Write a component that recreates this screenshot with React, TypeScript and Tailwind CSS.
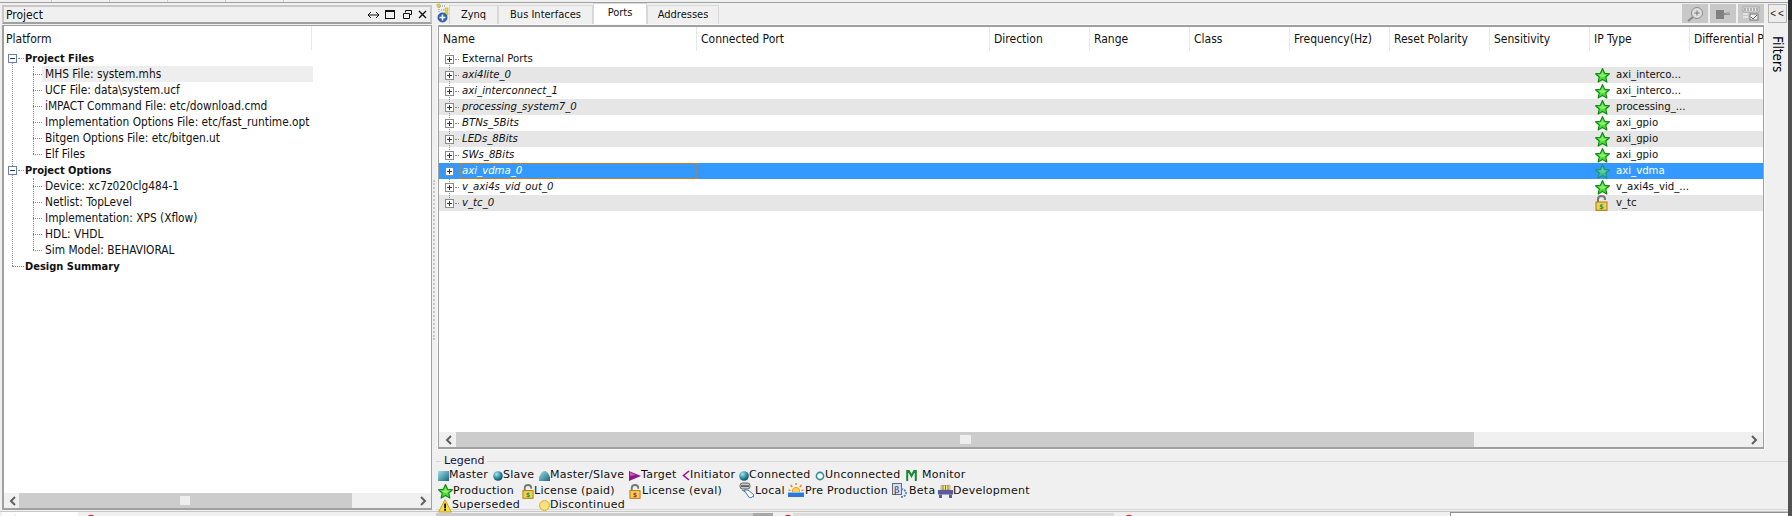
import React from "react";

const Star = ({ size = 14, dim = false }: { size?: number; dim?: boolean }) => (
  <svg width={size} height={size} viewBox="0 0 16 16" className="shrink-0" style={{ opacity: dim ? 0.55 : 1 }}>
    <path d="M8 .6 10.2 5.6 15.5 6.1 11.5 9.6 12.7 15 8 12.2 3.3 15 4.5 9.6.5 6.1 5.8 5.6Z" fill="#4fdc3a" stroke="#0a8a0a" strokeWidth="1.2" strokeLinejoin="round" />
    <path d="M8 4 9.2 7 12 7.4 9.8 9.2 6.2 9.2 4 7.4 6.8 7Z" fill="#8ff07a" />
  </svg>
);

const Lock = ({ color = "#1f9a3a", sign = "$", w = 13, h = 16 }: { color?: string; sign?: string; w?: number; h?: number }) => (
  <svg width={w} height={h} viewBox="0 0 13 16" className="shrink-0">
    <path d="M3 8V4.2C3 2 4.6 1 6.5 1S10 2 10 4.2V5" fill="none" stroke="#777" strokeWidth="2" />
    <rect x="1" y="7" width="11" height="8.4" fill="#f3cf3c" stroke="#b5761a" />
    <rect x="3" y="8.6" width="7" height="5.2" fill="#e8d860" />
    <text x="6.5" y="13.6" textAnchor="middle" fontSize="7" fontWeight="700" fontFamily="DejaVu Sans, sans-serif" fill={color}>{sign}</text>
  </svg>
);

const Ball = ({ hollow = false, size = 10 }: { hollow?: boolean; size?: number }) => (
  <svg width={size} height={size} viewBox="0 0 10 10" className="shrink-0">
    <defs>
      <radialGradient id="ballg" cx="35%" cy="30%" r="80%">
        <stop offset="0" stopColor="#a8e4ec" />
        <stop offset=".55" stopColor="#2a8c9e" />
        <stop offset="1" stopColor="#123c50" />
      </radialGradient>
    </defs>
    {hollow ? <circle cx="5" cy="5" r="3.6" fill="#fff" stroke="#2a8c9e" strokeWidth="1.6" /> : <circle cx="5" cy="5" r="4.8" fill="url(#ballg)" />}
  </svg>
);

const Square = () => (
  <svg width="11" height="10" viewBox="0 0 11 10" className="shrink-0">
    <defs>
      <linearGradient id="sqg" x1="0" y1="0" x2="1" y2="1">
        <stop offset="0" stopColor="#9fdfe8" />
        <stop offset="1" stopColor="#16657c" />
      </linearGradient>
    </defs>
    <rect width="11" height="10" fill="url(#sqg)" />
  </svg>
);

const Dome = () => (
  <svg width="11" height="10" viewBox="0 0 11 10" className="shrink-0">
    <path d="M0 10V6L2.5 1.5 5 0h1.5L9 2l2 4v4Z" fill="url(#sqg)" />
  </svg>
);

const Target = () => (
  <svg width="12" height="10" viewBox="0 0 12 10" className="shrink-0">
    <path d="M0 0 12 5 0 10Z" fill="#8a1a80" />
    <path d="M1 1 7 4 1 5Z" fill="#d050c8" />
  </svg>
);

const Initiator = () => (
  <svg width="8" height="11" viewBox="0 0 8 11" className="shrink-0">
    <path d="M7 1 1.5 5.5 7 10" fill="none" stroke="#a0109a" strokeWidth="1.6" />
  </svg>
);

const Monitor = () => (
  <svg width="11" height="11" viewBox="0 0 11 11" className="shrink-0">
    <path d="M1.2 11V1h1.6L5.5 6 8.2 1h1.6v10" fill="none" stroke="#178a30" strokeWidth="2" />
  </svg>
);

const Warn = () => (
  <svg width="14" height="14" viewBox="0 0 14 14" className="shrink-0">
    <path d="M7 .8 13.4 13H.6Z" fill="#f8e040" stroke="#c9a020" strokeWidth="1" strokeLinejoin="round" />
    <rect x="6.2" y="4.6" width="1.8" height="4.8" fill="#111" />
    <rect x="6.2" y="10" width="1.8" height="1.8" fill="#111" />
  </svg>
);

const Disc = () => (
  <svg width="11" height="11" viewBox="0 0 11 11" className="shrink-0">
    <circle cx="5.5" cy="5.5" r="4.9" fill="#fbe27a" stroke="#d8a828" />
  </svg>
);

const LocalIcon = () => (
  <svg width="16" height="16" viewBox="0 0 16 16" className="shrink-0 -mt-[3px]">
    <rect x="1" y="1" width="10" height="6" rx="2.5" fill="#c8c8c8" stroke="#666" />
    <rect x="2" y="3.4" width="8" height="1.4" fill="#444" />
    <path d="M3 8 15 15" stroke="#666" />
    <path d="M5 8h4l6 5-2 2.4h-3Z" fill="#fff" stroke="#3a78c8" />
  </svg>
);

const SunIcon = () => (
  <svg width="16" height="14" viewBox="0 0 16 14" className="shrink-0 -mt-[3px]">
    <path d="M8 0v2M2.5 2 4.2 4M13.5 2 11.8 4M.5 7l2 .6M15.5 7l-2 .6" stroke="#f08020" strokeWidth="1.4" />
    <circle cx="8" cy="8" r="3.6" fill="#fbd850" stroke="#f09820" />
    <path d="M0 9h16v1H0z" fill="#8ec0f0" />
    <path d="M0 10 16 10 16 14 0 14Z" fill="#2a78d8" />
  </svg>
);

const BetaIcon = () => (
  <svg width="16" height="15" viewBox="0 0 16 15" className="shrink-0 -mt-[3px]">
    <rect x=".5" y=".5" width="9" height="11" fill="#d8dcf0" stroke="#606890" />
    <text x="5" y="9.6" textAnchor="middle" fontSize="9" fontFamily="DejaVu Serif, serif" fill="#333">β</text>
    <path d="M9 6c3 0 5 2 5 4s-2 4-5 4" fill="none" stroke="#4a80d8" strokeWidth="1.8" strokeDasharray="2 1" />
  </svg>
);

const DevIcon = () => (
  <svg width="15" height="13" viewBox="0 0 15 13" className="shrink-0">
    <rect x="3" y="0" width="9" height="5" fill="#f4e48a" stroke="#a89030" strokeWidth=".6" />
    <path d="M5 0v5M7.5 0v5M10 0v5" stroke="#777" />
    <rect x="0" y="5" width="15" height="4.5" fill="#5a5a9c" />
    <rect x="1" y="9.5" width="3" height="3.5" fill="#5a5a9c" />
    <rect x="11" y="9.5" width="3" height="3.5" fill="#5a5a9c" />
  </svg>
);

const Plus = ({ minus = false, dark = false }: { minus?: boolean; dark?: boolean }) => (
  <svg width="9" height="9" viewBox="0 0 9 9" className="shrink-0">
    <rect x=".5" y=".5" width="8" height="8" fill="#fff" stroke={dark ? "#6b7ea8" : "#8a8a8a"} />
    <path d="M2 4.5h5" stroke={dark ? "#20309a" : "#333"} />
    {!minus && <path d="M4.5 2v5" stroke="#333" />}
  </svg>
);

const RedArc = () => (
  <svg width="10" height="5" viewBox="0 0 10 5" className="shrink-0">
    <circle cx="5" cy="6" r="4.5" fill="#fff" stroke="#d83030" strokeWidth="1.4" />
  </svg>
);

const tree: [string, 0 | 1, boolean?][] = [
  ["Project Files", 0],
  ["MHS File: system.mhs", 1, true],
  ["UCF File: data\\system.ucf", 1],
  ["iMPACT Command File: etc/download.cmd", 1],
  ["Implementation Options File: etc/fast_runtime.opt", 1],
  ["Bitgen Options File: etc/bitgen.ut", 1],
  ["Elf Files", 1],
  ["Project Options", 0],
  ["Device: xc7z020clg484-1", 1],
  ["Netlist: TopLevel", 1],
  ["Implementation: XPS (Xflow)", 1],
  ["HDL: VHDL", 1],
  ["Sim Model: BEHAVIORAL", 1],
  ["Design Summary", 0],
];

const cols = [
  ["Name", "w-[258px]"],
  ["Connected Port", "w-[293px]"],
  ["Direction", "w-[100px]"],
  ["Range", "w-[100px]"],
  ["Class", "w-[100px]"],
  ["Frequency(Hz)", "w-[100px]"],
  ["Reset Polarity", "w-[100px]"],
  ["Sensitivity", "w-[100px]"],
  ["IP Type", "w-[100px]"],
  ["Differential Pair", "w-[73px]"],
];

const ports: [string, string, boolean, "star" | "lock" | ""][] = [
  ["External Ports", "", false, ""],
  ["axi4lite_0", "axi_interco...", true, "star"],
  ["axi_interconnect_1", "axi_interco...", true, "star"],
  ["processing_system7_0", "processing_...", true, "star"],
  ["BTNs_5Bits", "axi_gpio", true, "star"],
  ["LEDs_8Bits", "axi_gpio", true, "star"],
  ["SWs_8Bits", "axi_gpio", true, "star"],
  ["axi_vdma_0", "axi_vdma", true, "star"],
  ["v_axi4s_vid_out_0", "v_axi4s_vid_...", true, "star"],
  ["v_tc_0", "v_tc", true, "lock"],
];

const ArrowL = () => (
  <svg width="8" height="10" viewBox="0 0 8 10"><path d="M6 1 2 5l4 4" fill="none" stroke="#606060" strokeWidth="2" /></svg>
);
const ArrowR = () => (
  <svg width="8" height="10" viewBox="0 0 8 10"><path d="M2 1l4 4-4 4" fill="none" stroke="#606060" strokeWidth="2" /></svg>
);

const Item = ({ w, icon, label }: { w: string; icon: React.ReactNode; label: string }) => (
  <div className={`flex items-center ${w} shrink-0`}>
    {icon}
    <span className="whitespace-nowrap">{label}</span>
  </div>
);

export default function App() {
  return (
    <div className="w-[1792px] h-[516px] overflow-hidden bg-[#f0f0f0] text-[#111] flex font-['DejaVu_Sans_Condensed','DejaVu_Sans',sans-serif] text-[11px]">
      <div className="w-[1788px] shrink-0 flex flex-col">
        <div className="h-[3px] shrink-0 border-b border-[#a0a0a0] flex">
          {[52, 58, 58, 58, 58].map((w, i) => (
            <div key={i} style={{ width: w }} className="h-[2px] border-r border-[#c8c8c8]" />
          ))}
        </div>
        <div className="flex flex-1 min-h-0">
          {/* left panel */}
          <div className="w-[432px] shrink-0 pl-[2px] flex flex-col">
            <div className="h-[19px] mt-[2px] shrink-0 border-2 border-[#c8c8c8] border-b-[#a0a0a0] flex items-center pl-[2px] pr-[3px] text-[12px]">
              <span className="flex-1">Project</span>
              <div className="flex items-center gap-[5px]">
                <svg width="11" height="8" viewBox="0 0 11 8"><path d="M0 4h11M3 1 0 4l3 3M8 1l3 3-3 3" fill="none" stroke="#111" /></svg>
                <svg width="10" height="9" viewBox="0 0 10 9" className="ml-[1px]"><rect x=".5" y=".5" width="9" height="8" fill="none" stroke="#111" /><path d="M0 1.5h10" stroke="#111" /></svg>
                <svg width="9" height="9" viewBox="0 0 9 9" className="ml-[3px]"><path d="M2.5 2.5V.5h6v4h-2M.5 3.5h6v5h-6z" fill="none" stroke="#111" /></svg>
                <svg width="9" height="9" viewBox="0 0 9 9" className="ml-[1px]"><path d="M1 1l7 7M8 1 1 8" stroke="#111" strokeWidth="1.4" /></svg>
              </div>
            </div>
            <div className="h-[1px] shrink-0" />
            <div className="flex-1 min-h-0 border-2 border-[#a0a0a0] border-t-[1px] border-r-[1px] bg-white flex flex-col">
              <div className="h-[24px] w-[308px] shrink-0 border-r border-[#e8e8e8] pl-[2px] pt-[2px] flex items-center text-[12px]">Platform</div>
              <div className="relative flex-1 min-h-0">
                <div className="absolute left-[8px] top-[8px] h-[208px] border-l border-dotted border-[#8a8a8a]" />
                <div className="absolute left-[29px] top-[16px] h-[88px] border-l border-dotted border-[#8a8a8a]" />
                <div className="absolute left-[29px] top-[128px] h-[72px] border-l border-dotted border-[#8a8a8a]" />
                {tree.map(([label, level, hi], i) =>
                  level === 0 ? (
                    <div key={i} className="relative h-[16px] flex items-center">
                      {label !== "Design Summary" ? (
                        <>
                          <span className="w-[4px]" />
                          <Plus minus dark />
                          <span className="w-[6px] ml-[1px] border-t border-dotted border-[#8a8a8a]" />
                        </>
                      ) : (
                        <>
                          <span className="w-[8px]" />
                          <span className="w-[12px] border-t border-dotted border-[#8a8a8a]" />
                        </>
                      )}
                      <span className="ml-[1px] pt-[2px] font-bold">{label}</span>
                    </div>
                  ) : (
                    <div key={i} className="relative h-[16px] flex items-center">
                      <span className="ml-[29px] w-[9px] border-t border-dotted border-[#8a8a8a]" />
                      <span className={`h-[16px] w-[271px] pl-[3px] pt-[2px] text-[11.8px] whitespace-nowrap flex items-center ${hi ? "bg-[#eeeeee]" : ""}`}>{label}</span>
                    </div>
                  )
                )}
              </div>
              <div className="h-[15px] shrink-0 bg-[#f0f0f0] flex items-center">
                <span className="w-[15px] flex justify-center pl-[2px]"><ArrowL /></span>
                <div className="w-[333px] h-[15px] bg-[#cccccc] flex items-center">
                  <div className="ml-[161px] w-[10px] h-[9px] bg-[#eeeeee]" />
                </div>
                <span className="ml-auto pr-[4px]"><ArrowR /></span>
              </div>
            </div>
            <div className="h-[1px] shrink-0" />
          </div>

          {/* grip */}
          <div className="w-[4px] shrink-0 relative">
            <div className="absolute left-[1px] top-[177px] h-[160px] border-l-2 border-dotted border-[#c8c8c8]" />
          </div>

          {/* right */}
          <div className="flex-1 min-w-0 flex flex-col">
            <div className="flex h-[22px] shrink-0 items-end">
              <svg width="13" height="20" viewBox="0 0 13 20" className="shrink-0 self-start">
                <rect x="1" y="1" width="3" height="3" fill="#e8e020" stroke="#b0a820" strokeWidth=".5" />
                <rect x="9" y="5" width="3" height="3" fill="#e8e020" stroke="#b0a820" strokeWidth=".5" />
                <rect x="9" y="9" width="3" height="3" fill="#e8e020" stroke="#b0a820" strokeWidth=".5" />
                <path d="M3 4v5M4 3h5M5 7h4" stroke="#888" strokeDasharray="1 1" />
                <circle cx="6.5" cy="14.5" r="5" fill="#3060b0" />
                <path d="M3.5 14.5h6M6.5 11.5v6" stroke="#fff" strokeWidth="1.6" />
              </svg>
              <div className="flex items-end h-[22px]">
                {[
                  ["Zynq", "w-[49px]"],
                  ["Bus Interfaces", "w-[95px]"],
                  ["Ports", "w-[54px]"],
                  ["Addresses", "w-[72px]"],
                ].map(([t, w]) =>
                  t === "Ports" ? (
                    <div key={t} className={`${w} h-[22px] bg-white border border-b-0 border-[#d8d8d8] flex items-center justify-center pb-[2px]`}>{t}</div>
                  ) : (
                    <div key={t} className={`${w} h-[20px] bg-[#f0f0f0] border border-b-0 border-[#d8d8d8] flex items-center justify-center`}>{t}</div>
                  )
                )}
              </div>
              <div className="flex-1 h-[22px] flex items-start justify-end pt-[1px] gap-[2px] pr-[1px]">
                <div className="w-[26px] h-[19px] bg-[#c8c8c8] flex items-center justify-center">
                  <svg width="18" height="16" viewBox="0 0 18 16"><circle cx="11" cy="7" r="5.5" fill="#dedede" stroke="#8a8a8a" /><path d="M11 4.5v5M8.5 7h5" stroke="#777" /><path d="M7 11 2 15" stroke="#8a8a8a" strokeWidth="2" /></svg>
                </div>
                <div className="w-[26px] h-[19px] bg-[#c8c8c8] flex items-center justify-center">
                  <svg width="18" height="12" viewBox="0 0 18 12"><rect x="2" y="2" width="8" height="9" fill="#808080" /><path d="M10 6h6" stroke="#909090" strokeWidth="2" /><circle cx="14" cy="5" r="1.6" fill="#a8a8a8" /></svg>
                </div>
                <div className="w-[26px] h-[19px] bg-[#c8c8c8] flex items-center justify-center">
                  <svg width="18" height="15" viewBox="0 0 18 15"><rect x="1" y="1" width="16" height="5" fill="#e8e8e8" stroke="#888" strokeWidth=".6" /><path d="M3 2v3M6 2v3M9 2v3M12 2v3M15 2v3" stroke="#777" /><path d="M1 8h5M1 11h5" stroke="#fff" /><rect x="8" y="8" width="8" height="6" fill="#eee" stroke="#777" /><path d="M9 11l2 2 4-4" fill="none" stroke="#666" /></svg>
                </div>
                <div className="ml-[2px] w-[19px] h-[19px] bg-[#ececec] border border-[#b4b4b4] flex items-center justify-center font-['Liberation_Sans',sans-serif] text-[10px] tracking-[2px] pl-[1px] text-[#222]">&lt;&lt;</div>
              </div>
            </div>

            <div className="flex h-[424px] shrink-0">
              {/* table */}
              <div className="ml-[2px] w-[1326px] h-[424px] shrink-0 border-2 border-[#a0a0a0] border-l-[1px] border-r-[1px] bg-white flex flex-col shadow-[0_0_0_1px_#fafafa]">
                <div className="flex h-[24px] shrink-0 overflow-hidden text-[12px]">
                  {cols.map(([c, w]) => (
                    <div key={c} className={`${w} shrink-0 pl-[4px] flex items-center whitespace-nowrap overflow-hidden border-r border-[#e8e8e8] last:border-r-0`}>{c}</div>
                  ))}
                </div>
                <div className="relative flex-1 min-h-0 text-[11.3px]">
                  <div className="absolute left-[10px] top-[2px] h-[155px] border-l border-dotted border-[#8a8a8a] z-10" />
                  {ports.map(([name, ip, italic, icon], i) => {
                    const sel = i === 7;
                    return (
                      <div key={name} className={`relative h-[16px] flex items-center ${sel ? "bg-[#3399ff] text-white" : i % 2 ? "bg-[#e6e6e6]" : "bg-white"}`}>
                        <div className="w-[258px] shrink-0 flex items-center h-[16px]">
                          <span className="w-[6px]" />
                          <span className="z-20 flex"><Plus /></span>
                          <span className="w-[4px] ml-[1px] border-t border-dotted border-[#8a8a8a]" />
                          <span className={`ml-[1px] h-[16px] flex-1 flex items-center whitespace-nowrap ${italic ? "italic" : ""} ${sel ? "border border-dotted border-[#d08020] pl-[1px]" : "pl-[2px]"}`}>{name}</span>
                        </div>
                        <div className="w-[893px] shrink-0" />
                        <div className="w-[100px] shrink-0 flex items-center pl-[5px] whitespace-nowrap">
                          <span className="w-[21px] flex">
                            {icon === "star" && <Star size={15} dim={sel} />}
                            {icon === "lock" && <Lock />}
                          </span>
                          <span>{ip}</span>
                        </div>
                      </div>
                    );
                  })}
                </div>
                <div className="h-[15px] shrink-0 bg-[#f0f0f0] flex items-center">
                  <span className="w-[17px] flex justify-center pl-[2px]"><ArrowL /></span>
                  <div className="w-[1018px] h-[15px] bg-[#cccccc] flex items-center">
                    <div className="ml-[504px] w-[11px] h-[9px] bg-[#eeeeee]" />
                  </div>
                  <span className="ml-auto pr-[5px]"><ArrowR /></span>
                </div>
              </div>
              {/* filters */}
              <div className="flex-1 flex justify-end pr-0 pt-[11px]">
                <span className="[writing-mode:vertical-rl] text-[13.5px] h-[38px] text-black">Filters</span>
              </div>
            </div>

            {/* legend */}
            <div className="relative mt-[12px] h-[49px] border-t border-b border-[#d8d8d8] shrink-0 pt-[6px] pl-[2px] font-['DejaVu_Sans',sans-serif] text-[11px] tracking-[0.25px]">
              <span className="absolute left-[5px] top-[-7px] bg-[#f0f0f0] px-[3px] text-[#101040] text-[11px] tracking-normal leading-[12px]">Legend</span>
              <div className="flex h-[15px] items-center">
                <Item w="w-[55px]" icon={<Square />} label="Master" />
                <Item w="w-[46px]" icon={<Ball />} label="Slave" />
                <Item w="w-[90px]" icon={<Dome />} label="Master/Slave" />
                <Item w="w-[53px]" icon={<Target />} label="Target" />
                <Item w="w-[57px]" icon={<Initiator />} label="Initiator" />
                <Item w="w-[76px]" icon={<Ball />} label="Connected" />
                <Item w="w-[91px]" icon={<Ball hollow />} label="Unconnected" />
                <Item w="w-[60px]" icon={<span className="mr-[5px] flex"><Monitor /></span>} label="Monitor" />
              </div>
              <div className="flex h-[15px] mt-[1px] items-center">
                <Item w="w-[84px]" icon={<Star size={15} />} label="Production" />
                <Item w="w-[107px]" icon={<Lock w={12} h={15} />} label="License (paid)" />
                <Item w="w-[110px]" icon={<span className="mr-[1px] flex"><Lock color="#d02040" w={12} h={15} /></span>} label="License (eval)" />
                <Item w="w-[49px]" icon={<LocalIcon />} label="Local" />
                <Item w="w-[104px]" icon={<span className="mr-[1px] flex"><SunIcon /></span>} label="Pre Production" />
                <Item w="w-[46px]" icon={<span className="mr-[1px] flex"><BetaIcon /></span>} label="Beta" />
                <Item w="w-[100px]" icon={<DevIcon />} label="Development" />
              </div>
              <div className="flex h-[13px] items-center">
                <Item w="w-[101px]" icon={<Warn />} label="Superseded" />
                <Item w="w-[100px]" icon={<Disc />} label="Discontinued" />
              </div>
            </div>
          </div>
        </div>
        {/* bottom tab strip */}
        <div className="h-[5px] shrink-0 flex border-t border-[#c8c8c8]">
          <div className="w-[76px] ml-[2px] bg-white pl-[8px] pt-[3px] overflow-hidden"><RedArc /></div>
          <div className="w-[358px] pl-[8px] pt-[2px] overflow-hidden"><RedArc /></div>
          <div className="w-[317px] mt-[1px] bg-[#cccccc]" />
          <div className="w-[20px] mt-[1px] bg-[#a8a8a8]" />
          <div className="w-[10px]" />
          <div className="w-[10px] pt-[2px] overflow-hidden"><RedArc /></div>
          <div className="w-[321px] mt-[1px] bg-[#dcdcdc]" />
          <div className="w-[22px] pl-[10px] pt-[2px] overflow-hidden"><RedArc /></div>
          <div className="w-[314px]" />
          <div className="flex-1 bg-white border-t border-[#909090] border-l" />
        </div>
      </div>
      <div className="flex-1 flex flex-col">
        <div className="h-[20px] bg-[#2a2a2a]" />
        <div className="flex-1 bg-[#525252]" />
      </div>
    </div>
  );
}
